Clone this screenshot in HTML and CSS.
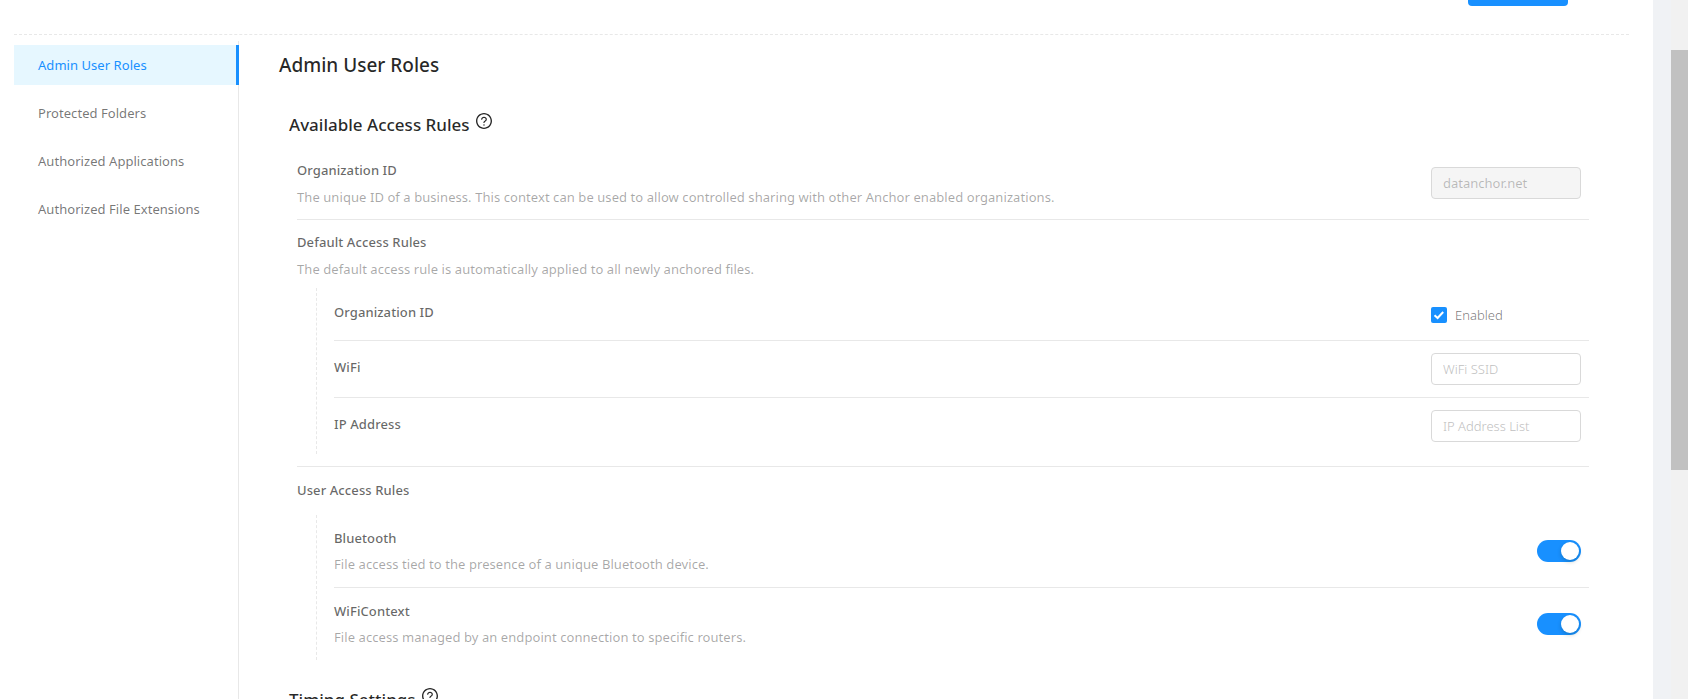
FILE: index.html
```html
<!DOCTYPE html>
<html lang="en">

<head>
    <meta charset="UTF-8">
    <meta name="viewport" content="width=device-width, initial-scale=1.0">
    <title>Admin User Roles</title>
    <link rel="stylesheet" href="styles.css">
</head>

<body>
    <svg class="iconDefs" width="0" height="0">
        <symbol id="helpIcon" viewBox="64 64 896 896">
            <path d="M512 64C264.6 64 64 264.6 64 512s200.6 448 448 448 448-200.6 448-448S759.4 64 512 64zm0 820c-205.4 0-372-166.6-372-372s166.6-372 372-372 372 166.6 372 372-166.6 372-372 372z"></path>
            <path d="M623.6 316.7C593.6 290.4 554 276 512 276s-81.6 14.5-111.6 40.7C369.2 344 352 380.7 352 420v7.6c0 4.4 3.6 8 8 8h48c4.4 0 8-3.6 8-8V420c0-44.1 43.1-80 96-80s96 35.9 96 80c0 31.1-22 59.6-56.1 72.7-21.2 8.1-39.2 22.3-52.1 40.9-13.1 19-19.9 41.8-19.9 64.9V620c0 4.4 3.6 8 8 8h48c4.4 0 8-3.6 8-8v-22.7a48.3 48.3 0 0 1 30.9-44.8c59-22.7 97.1-74.7 97.1-134.5 0-39.3-17.2-76-48.4-103.3z"></path>
            <path d="M472 732a40 40 0 1 0 80 0 40 40 0 1 0-80 0z"></path>
        </symbol>
    </svg>
    <div class="page">
        <header class="topBar">
            <button class="btn" aria-label="Save"></button>
        </header>
        <div class="columns">
            <nav class="sideNav">
                <a class="navItem active">Admin User Roles</a>
                <a class="navItem">Protected Folders</a>
                <a class="navItem">Authorized Applications</a>
                <a class="navItem">Authorized File Extensions</a>
            </nav>
            <main class="content">
                <h1>Admin User Roles</h1>
                <section class="settings">
                    <h2>Available Access Rules <svg class="help"><use href="#helpIcon"></use></svg></h2>
                    <div class="row firstRow">
                        <div>
                            <h3>Organization ID</h3>
                            <p>The unique ID of a business. This context can be used to allow controlled sharing with other Anchor enabled organizations.</p>
                        </div>
                        <input type="text" class="field" value="datanchor.net" disabled>
                    </div>
                    <div class="row groupRow">
                        <h3>Default Access Rules</h3>
                        <p>The default access rule is automatically applied to all newly anchored files.</p>
                        <div class="subGroup">
                            <div class="subRow checkRow">
                                <h3>Organization ID</h3>
                                <label class="check"><span class="box"><svg viewBox="0 0 16 16"><polyline points="3.5,8.2 6.6,11 12.2,5"></polyline></svg></span>Enabled</label>
                            </div>
                            <div class="subRow fieldRow">
                                <h3>WiFi</h3>
                                <input type="text" class="field" placeholder="WiFi SSID">
                            </div>
                            <div class="subRow fieldRow">
                                <h3>IP Address</h3>
                                <input type="text" class="field" placeholder="IP Address List">
                            </div>
                        </div>
                    </div>
                    <div class="userRules">
                        <h3>User Access Rules</h3>
                        <div class="subGroup">
                            <div class="subRow switchRow">
                                <div>
                                    <h3>Bluetooth</h3>
                                    <p>File access tied to the presence of a unique Bluetooth device.</p>
                                </div>
                                <span class="switch"></span>
                            </div>
                            <div class="subRow switchRow">
                                <div>
                                    <h3>WiFiContext</h3>
                                    <p>File access managed by an endpoint connection to specific routers.</p>
                                </div>
                                <span class="switch"></span>
                            </div>
                        </div>
                    </div>
                </section>
                <section class="settings timing">
                    <h2>Timing Settings <svg class="help"><use href="#helpIcon"></use></svg></h2>
                </section>
            </main>
        </div>
    </div>
    <div class="gutter"></div>
    <div class="scrollTrack">
        <div class="scrollThumb"></div>
    </div>
</body>

</html>
```

FILE: styles.css
```css
html {
    background-color: white;
}

body {
    margin: 0;
    height: 699px;
    overflow: hidden;
    display: flex;
    font-family: "Noto Sans", sans-serif;
    font-size: 13px;
    color: rgba(0, 0, 0, 0.65);
}

.iconDefs {
    position: absolute;
}

.page {
    width: 1653px;
    flex: none;
    padding: 0 24px 0 14px;
    box-sizing: border-box;
}

.gutter {
    width: 18px;
    flex: none;
    background-color: #f0f2f5;
}

.scrollTrack {
    width: 17px;
    flex: none;
    background-color: #f1f1f1;
}

.scrollThumb {
    margin-top: 50px;
    height: 420px;
    background-color: #c1c1c1;
}

.topBar {
    height: 6px;
    border-bottom: 1px dashed #e8e8e8;
    display: flex;
    justify-content: flex-end;
    align-items: flex-end;
    padding: 0 61px 28px 0;
    margin-bottom: 6px;
}

.btn {
    width: 100px;
    height: 32px;
    flex: none;
    margin-top: -26px;
    border: 0;
    border-radius: 4px;
    background-color: #1890ff;
}

.columns {
    display: flex;
}

.sideNav {
    width: 225px;
    flex: none;
    box-sizing: border-box;
    padding-top: 4px;
    border-right: 1px solid #e8e8e8;
    height: 660px;
}

.navItem {
    display: block;
    height: 40px;
    line-height: 40px;
    margin: 0 -1px 8px 0;
    padding-left: 24px;
    font-size: 13px;
    letter-spacing: 0.05px;
    color: rgba(0, 0, 0, 0.55);
}

.navItem.active {
    color: #1890ff;
    background-color: #e6f7ff;
    border-right: 3px solid #1890ff;
}

.content {
    flex: 1;
    padding-left: 40px;
}

h1 {
    margin: 10px 0 0 0;
    font-size: 19px;
    line-height: 28px;
    font-weight: 500;
    color: rgba(0, 0, 0, 0.85);
}

h2 {
    margin: 0;
    font-size: 17px;
    line-height: 28px;
    font-weight: 500;
    color: rgba(0, 0, 0, 0.85);
}

h3 {
    margin: 0;
    font-size: 13px;
    line-height: 22px;
    font-weight: 500;
    letter-spacing: 0.1px;
    color: rgba(0, 0, 0, 0.6);
}

p {
    margin: 5px 0 0 0;
    font-size: 13px;
    line-height: 22px;
    letter-spacing: 0.07px;
    color: rgba(0, 0, 0, 0.35);
}

.settings {
    margin-top: 32px;
    padding-left: 10px;
    width: 1300px;
}

.timing {
    margin-top: 26px;
}

.help {
    width: 16px;
    height: 16px;
    fill: rgba(0, 0, 0, 0.85);
    margin-left: 2px;
    vertical-align: 2px;
}

.row {
    margin-left: 8px;
    padding-right: 8px;
    border-bottom: 1px solid #e8e8e8;
}

.firstRow {
    display: flex;
    justify-content: space-between;
    align-items: center;
    padding-top: 20px;
    padding-bottom: 11px;
}

.firstRow .field {
    margin-bottom: 1px;
}

.groupRow {
    padding-top: 11px;
    padding-right: 0;
    padding-bottom: 12px;
}

.userRules {
    margin-left: 8px;
    padding-top: 12px;
}

.subGroup {
    margin: 8px 0 0 19px;
    padding-left: 17px;
    border-left: 1px dashed #e8e8e8;
}

.userRules .subGroup {
    margin-top: 14px;
}

.subRow {
    display: flex;
    justify-content: space-between;
    align-items: center;
    padding-right: 8px;
    border-bottom: 1px solid #e8e8e8;
}

.subRow:last-child {
    border-bottom: 0;
}

.checkRow {
    height: 52px;
}

.fieldRow {
    padding-top: 12px;
    padding-bottom: 12px;
}

.fieldRow h3 {
    margin-bottom: 4px;
}

.checkRow h3 {
    margin-bottom: 4px;
}

.switchRow {
    padding-top: 12px;
    padding-bottom: 12px;
}

.switchRow p {
    margin-top: 4px;
}

.field {
    width: 150px;
    height: 32px;
    flex: none;
    box-sizing: border-box;
    padding: 0 11px;
    border: 1px solid #d9d9d9;
    border-radius: 4px;
    background-color: white;
    font-family: inherit;
    font-size: 13px;
    color: rgba(0, 0, 0, 0.25);
}

.field::placeholder {
    color: #bfbfbf;
    font-weight: 300;
}

.field:disabled {
    background-color: #f5f5f5;
}

.check {
    width: 150px;
    display: flex;
    align-items: center;
    margin-top: 2px;
    font-size: 13px;
    font-weight: 300;
    color: rgba(0, 0, 0, 0.55);
}

.box {
    width: 16px;
    height: 16px;
    margin-right: 8px;
    border-radius: 2px;
    background-color: #1890ff;
}

.box svg {
    display: block;
    fill: none;
    stroke: white;
    stroke-width: 2;
}

.switch {
    width: 44px;
    height: 22px;
    flex: none;
    box-sizing: border-box;
    padding: 2px 2px 2px 24px;
    border-radius: 11px;
    background-color: #1890ff;
}

.switch::after {
    content: "";
    display: block;
    width: 18px;
    height: 18px;
    border-radius: 50%;
    background-color: white;
    box-shadow: 0 2px 4px rgba(0, 35, 11, 0.2);
}
```
